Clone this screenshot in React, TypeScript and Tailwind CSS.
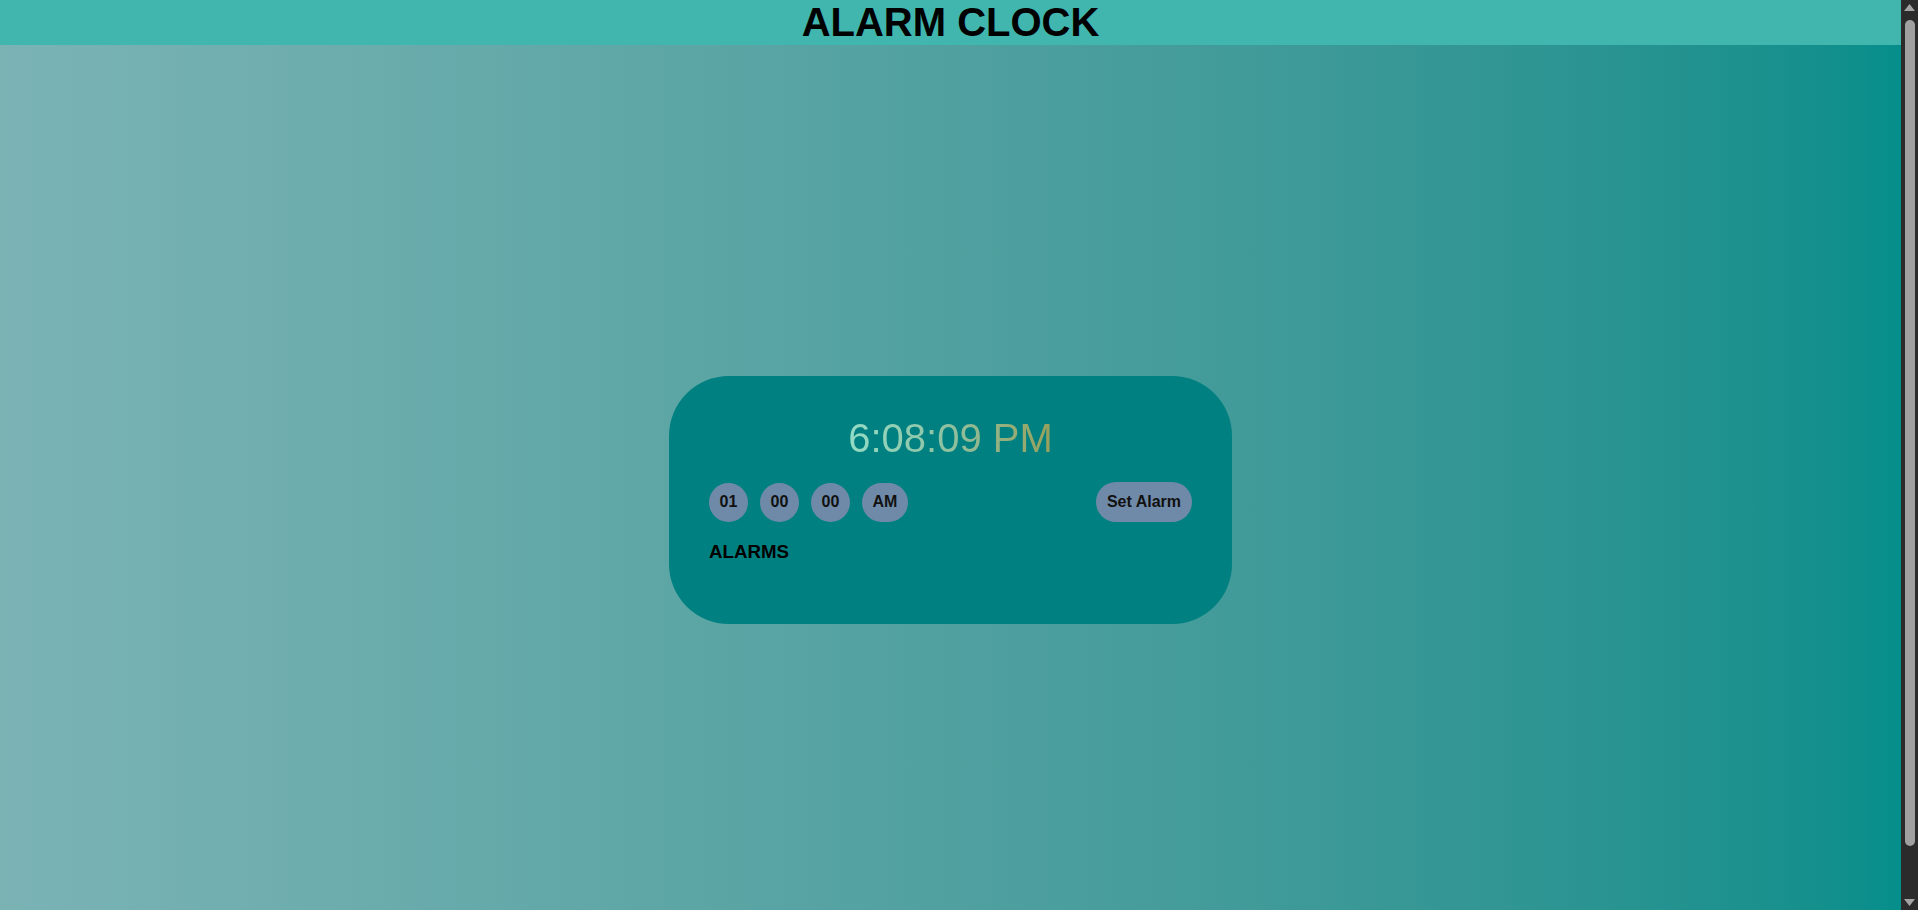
import * as React from "react";

/**
 * Alarm clock: header bar + centered card
 */
const font = { fontFamily: '"Liberation Sans", Arial, sans-serif' };

function Pill({ children }: { children: React.ReactNode }) {
  return (
    <div className="h-[39px] min-w-[39px] px-[10.5px] rounded-full bg-[#6f8aa8] flex items-center justify-center text-[16px] font-bold text-[#111]">
      {children}
    </div>
  );
}

// barra de desplazamiento como en la captura
function ScrollBar() {
  return (
    <aside className="sticky top-0 h-[910px] w-[17px] shrink-0 bg-[#2b2b2b] flex flex-col items-center">
      <svg width="11" height="7" viewBox="0 0 11 7" className="mt-[4px]">
        <path d="M5.5 0 L11 7 L0 7 Z" fill="#a3a3a3" />
      </svg>
      <div className="mt-[9px] h-[826px] w-[10px] rounded-full bg-[#a0a0a0]" />
      <div className="flex-1" />
      <svg width="11" height="7" viewBox="0 0 11 7" className="mb-[4px]">
        <path d="M0 0 L11 0 L5.5 7 Z" fill="#a3a3a3" />
      </svg>
    </aside>
  );
}

export default function App() {
  return (
    <div style={font} className="w-full flex items-start">
      <div className="flex-1 min-w-0">
        {/* Header */}
        <header className="h-[45px] bg-[#41b6ae] flex items-center justify-center">
          <h1 className="text-[40px] font-bold leading-[45px] text-black">ALARM CLOCK</h1>
        </header>

        {/* Main */}
        <main className="h-[910px] bg-gradient-to-r from-[#7bb3b5] to-[#058e8b] flex items-center justify-center">
          <div className="w-[563px] rounded-[60px] bg-[#008080] px-10 pt-[39px] pb-[61px]">
            <div className="text-center text-[40px] leading-[46px]">
              <span className="bg-gradient-to-r from-[#93dcc6] via-[#8fc0a0] to-[#98a05a] bg-clip-text text-transparent">
                6:08:09 PM
              </span>
            </div>

            <div className="mt-[21px] flex items-center justify-between">
              <div className="flex items-center gap-[12px]">
                <Pill>01</Pill>
                <Pill>00</Pill>
                <Pill>00</Pill>
                <Pill>AM</Pill>
              </div>
              <button className="h-[40px] px-[11px] rounded-full bg-[#6f8aa8] text-[16px] font-bold text-[#111]">
                Set Alarm
              </button>
            </div>

            <h3 className="mt-[19px] text-[18.72px] font-bold leading-[21.5px] text-black">ALARMS</h3>
          </div>
        </main>
      </div>
      <ScrollBar />
    </div>
  );
}
